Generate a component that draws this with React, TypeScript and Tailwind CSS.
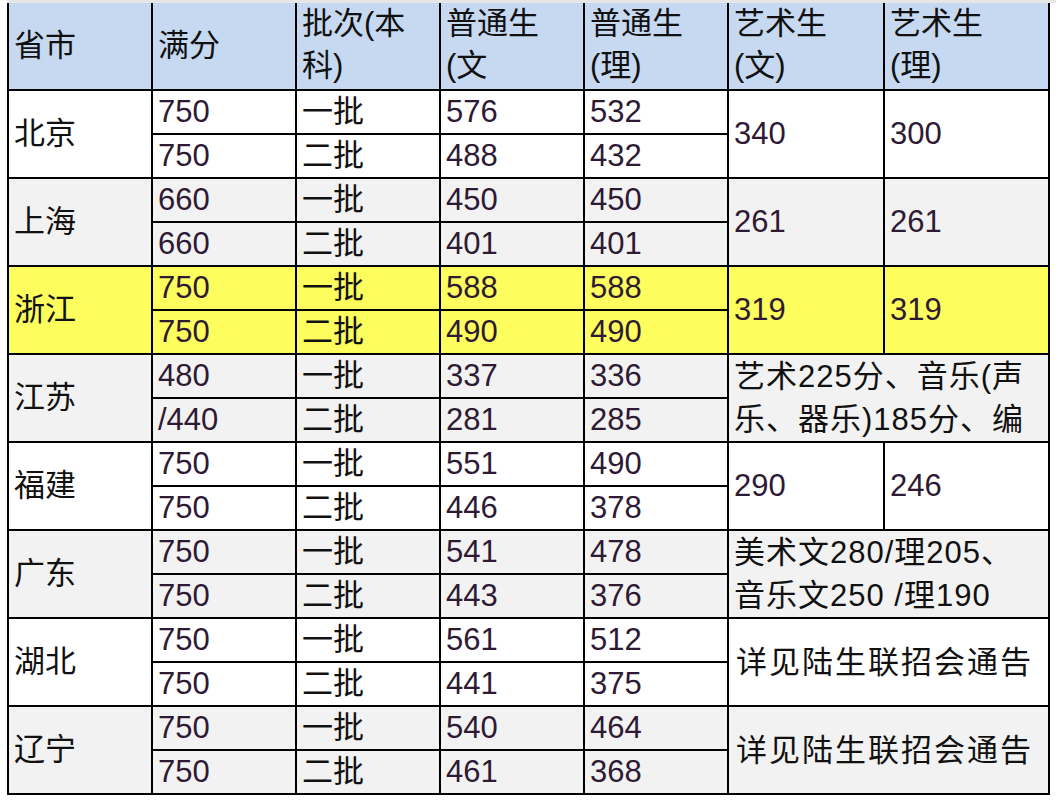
import React from "react";

type Group = {
  prov: string;
  bg: string;
  rows: { full: string; batch: string; wen: string; li: string }[];
  art: { wen: string; li: string } | { text: string[]; center?: boolean };
};

const groups: Group[] = [
  {
    prov: "北京",
    bg: "bg-white",
    rows: [
      { full: "750", batch: "一批", wen: "576", li: "532" },
      { full: "750", batch: "二批", wen: "488", li: "432" },
    ],
    art: { wen: "340", li: "300" },
  },
  {
    prov: "上海",
    bg: "bg-[#f2f2f2]",
    rows: [
      { full: "660", batch: "一批", wen: "450", li: "450" },
      { full: "660", batch: "二批", wen: "401", li: "401" },
    ],
    art: { wen: "261", li: "261" },
  },
  {
    prov: "浙江",
    bg: "bg-[#fdfd5e]",
    rows: [
      { full: "750", batch: "一批", wen: "588", li: "588" },
      { full: "750", batch: "二批", wen: "490", li: "490" },
    ],
    art: { wen: "319", li: "319" },
  },
  {
    prov: "江苏",
    bg: "bg-[#f2f2f2]",
    rows: [
      { full: "480", batch: "一批", wen: "337", li: "336" },
      { full: "/440", batch: "二批", wen: "281", li: "285" },
    ],
    art: { text: ["艺术225分、音乐(声", "乐、器乐)185分、编"] },
  },
  {
    prov: "福建",
    bg: "bg-white",
    rows: [
      { full: "750", batch: "一批", wen: "551", li: "490" },
      { full: "750", batch: "二批", wen: "446", li: "378" },
    ],
    art: { wen: "290", li: "246" },
  },
  {
    prov: "广东",
    bg: "bg-[#f2f2f2]",
    rows: [
      { full: "750", batch: "一批", wen: "541", li: "478" },
      { full: "750", batch: "二批", wen: "443", li: "376" },
    ],
    art: { text: ["美术文280/理205、", "音乐文250 /理190"] },
  },
  {
    prov: "湖北",
    bg: "bg-white",
    rows: [
      { full: "750", batch: "一批", wen: "561", li: "512" },
      { full: "750", batch: "二批", wen: "441", li: "375" },
    ],
    art: { text: ["详见陆生联招会通告"], center: true },
  },
  {
    prov: "辽宁",
    bg: "bg-[#f2f2f2]",
    rows: [
      { full: "750", batch: "一批", wen: "540", li: "464" },
      { full: "750", batch: "二批", wen: "461", li: "368" },
    ],
    art: { text: ["详见陆生联招会通告"], center: true },
  },
];

const head = "border-2 border-t-0 border-black px-[5px] font-normal text-left whitespace-nowrap";
const cell = "border-2 border-black px-[5px] align-middle whitespace-nowrap overflow-hidden";
const num = "text-[#2e1a33]";

export default function App() {
  return (
    <div
      className="w-[1056px] h-[800px] bg-white overflow-hidden text-[31px] text-[#111] pl-[7px]"
      style={{ fontFamily: '"Liberation Sans", "Noto Sans CJK SC", sans-serif' }}
    >
      <div className="h-[3px] bg-[#e6e6e6]" />
      <table className="table-fixed border-collapse leading-[42px]">
        <colgroup>
          <col className="w-[144px]" />
          <col className="w-[144px]" />
          <col className="w-[144px]" />
          <col className="w-[144px]" />
          <col className="w-[144px]" />
          <col className="w-[156px]" />
          <col className="w-[165px]" />
        </colgroup>
        <thead>
          <tr className="h-[87px] bg-[#c6d9f0]">
            <th className={head}>省市</th>
            <th className={head}>满分</th>
            <th className={`${head} align-top`}>
              批次(本
              <br />
              科)
            </th>
            <th className={`${head} align-top`}>
              普通生
              <br />
              (文
            </th>
            <th className={`${head} align-top`}>
              普通生
              <br />
              (理)
            </th>
            <th className={`${head} align-top`}>
              艺术生
              <br />
              (文)
            </th>
            <th className={`${head} align-top`}>
              艺术生
              <br />
              (理)
            </th>
          </tr>
        </thead>
        <tbody>
          {groups.map((g) =>
            g.rows.map((r, i) => (
              <tr key={g.prov + i} className={`h-[44px] ${g.bg}`}>
                {i === 0 && (
                  <td rowSpan={2} className={cell}>
                    {g.prov}
                  </td>
                )}
                <td className={`${cell} ${num}`}>{r.full}</td>
                <td className={cell}>{r.batch}</td>
                <td className={`${cell} ${num}`}>{r.wen}</td>
                <td className={`${cell} ${num}`}>{r.li}</td>
                {i === 0 &&
                  ("wen" in g.art ? (
                    <>
                      <td rowSpan={2} className={`${cell} ${num}`}>
                        {g.art.wen}
                      </td>
                      <td rowSpan={2} className={`${cell} ${num}`}>
                        {g.art.li}
                      </td>
                    </>
                  ) : (
                    <td rowSpan={2} colSpan={2} className={cell}>
                      <div
                        className={`max-h-[86px] overflow-hidden leading-[43px] ${
                          g.art.center ? "tracking-[2px] pl-[2px]" : "tracking-[1px]"
                        }`}
                      >
                        {g.art.text.map((t) => (
                          <div key={t}>{t}</div>
                        ))}
                      </div>
                    </td>
                  ))}
              </tr>
            ))
          )}
        </tbody>
      </table>
    </div>
  );
}
